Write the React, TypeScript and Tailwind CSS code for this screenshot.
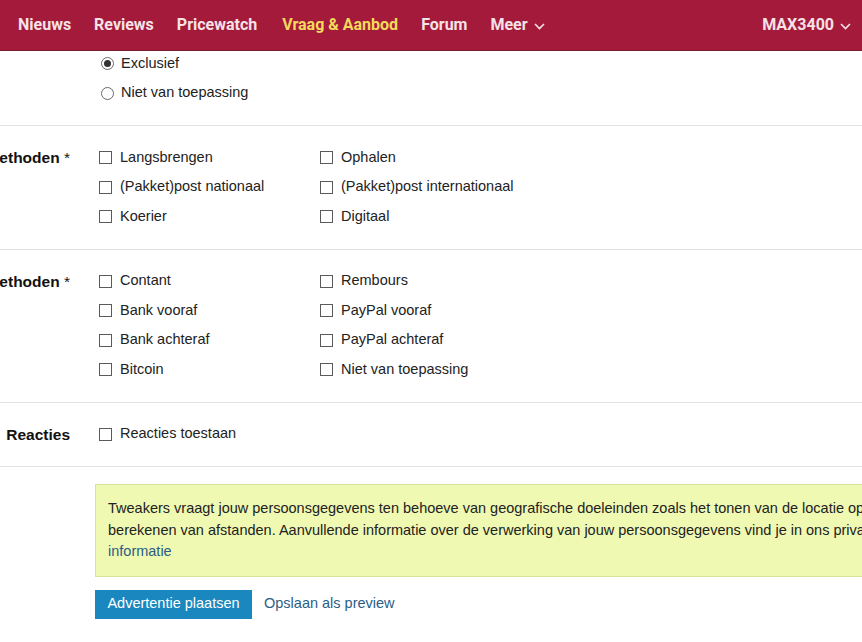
import React from "react";

const Chevron = () => (
  <svg width="11" height="7" viewBox="0 0 11 7" className="ml-[6px] mt-[2px]">
    <path d="M1 1l4.5 4.5L10 1" fill="none" stroke="currentColor" strokeWidth="1.6" />
  </svg>
);

const Checkbox = ({ label }: { label: string }) => (
  <div className="flex items-center h-[29.5px]">
    <span className="w-[13px] h-[13px] border border-[#5a5a5a] bg-white mr-[8px] shrink-0" />
    <span>{label}</span>
  </div>
);

const Radio = ({ label, checked }: { label: string; checked?: boolean }) => (
  <div className="flex items-center h-[29.5px]">
    <span className="ml-[2px] w-[13px] h-[13px] rounded-full border border-[#6a6a6a] bg-white mr-[7px] shrink-0 flex items-center justify-center">
      {checked && <span className="w-[7px] h-[7px] rounded-full bg-[#333]" />}
    </span>
    <span>{label}</span>
  </div>
);

function Row({
  label,
  children,
  first,
}: {
  label?: React.ReactNode;
  children: React.ReactNode;
  first?: boolean;
}) {
  return (
    <div className={first ? "flex border-b border-[#e3e3e3] -mt-[2px] pb-[17px]" : "flex border-b border-[#e3e3e3] py-[17px]"}>
      <div className="w-[70px] shrink-0 flex justify-end whitespace-nowrap font-bold text-[15.5px] leading-[29.5px] text-[#111]">
        {label}
      </div>
      <div className="ml-[29px]">{children}</div>
    </div>
  );
}

export default function App() {
  return (
    <div className="h-[642px] w-full overflow-hidden bg-white font-['Liberation_Sans',Arial,sans-serif] text-[14.5px] text-[#222]">
      {/* top bar */}
      <div className="relative z-10 h-[51px] bg-[#a31a3b] border-b border-[#7a1a2e] flex items-center pl-[18px] pr-[11px] font-['Roboto',sans-serif] font-bold text-[16px] text-[#f6e2e7]">
        <div className="flex items-center">
          <span>Nieuws</span>
          <span className="ml-[23px]">Reviews</span>
          <span className="ml-[23px]">Pricewatch</span>
          <span className="ml-[25px] text-[#f3d95c]">Vraag &amp; Aanbod</span>
          <span className="ml-[23px]">Forum</span>
          <span className="ml-[23px] flex items-center">
            Meer
            <Chevron />
          </span>
        </div>
        <span className="ml-auto flex items-center">
          MAX3400
          <Chevron />
        </span>
      </div>

      {/* form */}
      <Row first>
        <Radio label="Exclusief" checked />
        <Radio label="Niet van toepassing" />
      </Row>

      <Row
        label={
          <span>
            Verzendmethoden <span className="font-normal">*</span>
          </span>
        }
      >
        <div className="grid grid-cols-[221px_221px]">
          <Checkbox label="Langsbrengen" />
          <Checkbox label="Ophalen" />
          <Checkbox label="(Pakket)post nationaal" />
          <Checkbox label="(Pakket)post internationaal" />
          <Checkbox label="Koerier" />
          <Checkbox label="Digitaal" />
        </div>
      </Row>

      <Row
        label={
          <span>
            Betaalmethoden <span className="font-normal">*</span>
          </span>
        }
      >
        <div className="grid grid-cols-[221px_221px]">
          <Checkbox label="Contant" />
          <Checkbox label="Rembours" />
          <Checkbox label="Bank vooraf" />
          <Checkbox label="PayPal vooraf" />
          <Checkbox label="Bank achteraf" />
          <Checkbox label="PayPal achteraf" />
          <Checkbox label="Bitcoin" />
          <Checkbox label="Niet van toepassing" />
        </div>
      </Row>

      <Row label="Reacties">
        <Checkbox label="Reacties toestaan" />
      </Row>

      <div className="pl-[95px] pt-[17px]">
        <div className="w-[1000px] border border-[#d6e59c] bg-[#eff9b1] px-[12px] py-[13px] leading-[21.5px] whitespace-nowrap text-[#222]">
          <div>
            Tweakers vraagt jouw persoonsgegevens ten behoeve van geografische doeleinden zoals het tonen van de locatie op de kaart en het
          </div>
          <div>
            berekenen van afstanden. Aanvullende informatie over de verwerking van jouw persoonsgegevens vind je in ons privacy-
          </div>
          <div>
            <a className="text-[#2b5d86]">informatie</a>
          </div>
        </div>
        <div className="mt-[13px] flex items-center gap-[12px]">
          <button className="w-[157px] h-[29px] bg-[#1a88be] text-white text-[14.5px]">
            Advertentie plaatsen
          </button>
          <a className="text-[#2b5d86]">Opslaan als preview</a>
        </div>
      </div>
    </div>
  );
}
